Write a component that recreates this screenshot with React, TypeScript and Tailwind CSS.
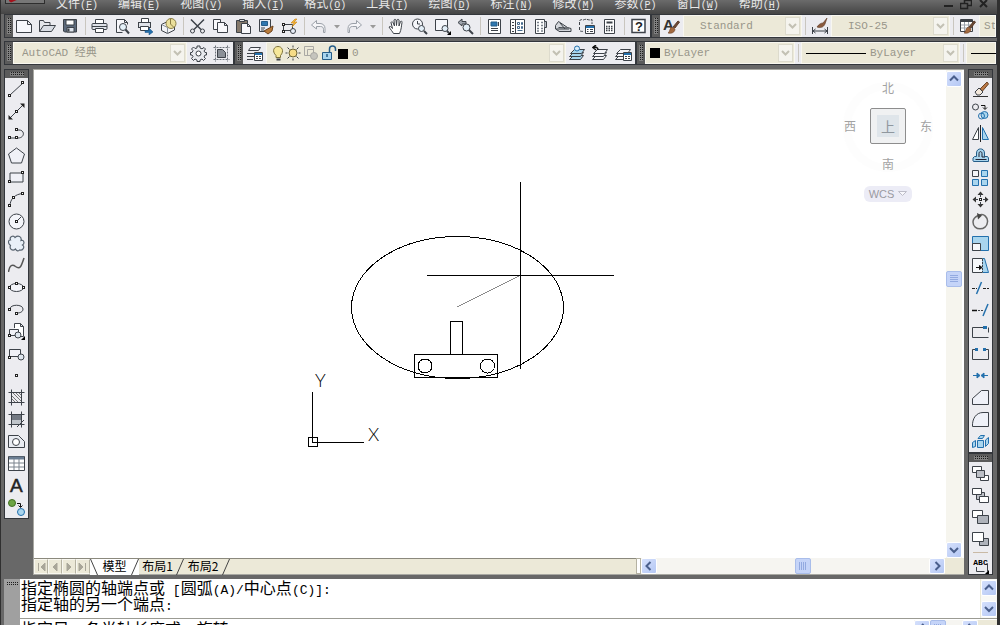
import type { ReactNode } from "react";

const INK = "#3d4249";
const BLUE = "#2370ad";
const SKY = "#a9d5ee";

type Tool = { name: string; icon: ReactNode; slim?: boolean };

const Icon = ({ children }: { children: ReactNode }) => (
  <svg width="17" height="17" viewBox="0 0 17 17" fill="none" stroke={INK} className="shrink-0" aria-hidden="true">
    {children}
  </svg>
);

const Node = ({ x, y }: { x: number; y: number }) => (
  <rect x={x - 0.5} y={y - 0.5} width="2" height="2" fill="#fff" stroke="#222" />
);

const Brush = () => (
  <>
    <path d="M10 9l5-6 1.500 1-4.500 6z" fill="#6d4a35" stroke="#5a3c2c" />
    <path d="M5 15c2-1 1-4 4-6l3 2c0 3-3 5-7 4z" fill="#a2693f" stroke="#6b4026" strokeWidth=".6" />
  </>
);

const Caret = () => <path d="M6 7h6l-3 3.500z" fill="#9a9a9a" stroke="none" />;
const Corner = () => <path d="M17 13v4h-4z" fill="#000" stroke="none" />;

// standard toolbar
const fileTools: Tool[] = [
  { name: "新建", icon: <path d="M.5 2.500h11l4 4v8h-15zM11.500 2.500v4h4" fill="#f7f8fc" /> },
  { name: "打开", icon: <><path d="M.5 13.500v-11h4l1 2h5.500v3" fill="#e4e6ea" /><path d="M.5 13.500l4-6h12l-4 6z" fill="#d9dde4" /></> },
  { name: "保存", icon: <><path d="M1.500 1.500h13v12.500h-12l-1-1z" fill="#5d6a7c" /><path d="M4 2h8v5H4z" fill="#fff" /><path d="M5 9.500h7v4.500H5z" fill="#dfe5ee" /><path d="M6.500 10.500v3" strokeWidth="2" /></> },
];

const plotTools: Tool[] = [
  { name: "打印", icon: <><path d="M4.500 6V1.500h8V6" fill="#fff" /><rect x="1" y="5.500" width="15" height="6" rx="1" fill="#dfe2e8" /><path d="M1 8.500h15" /><path d="M4.500 10.500h8v4h-8z" fill="#fff" /></> },
  { name: "打印预览", icon: <><path d="M2.500 14.500v-13h8l3 3v2M10.500 1.500v3h3M2.500 14.500h6" fill="#f8f8fb" /><circle cx="9" cy="9" r="3.500" fill="#e5f1f9" /><path d="M11.500 11.500l3.500 4" strokeWidth="2" /></> },
  { name: "发布", icon: <><path d="M4.500 5V.5h7V5" fill="#fff" /><rect x="1.500" y="4.500" width="12" height="5" fill="#dfe2e8" /><path d="M3.500 8.500h8v4h-8z" fill="#fff" /><path d="M8 12.500h4v-2.500l4 4-4 3v-2.500H8z" fill={BLUE} stroke="#164f80" strokeWidth=".5" /></> },
  { name: "三维 DWF", icon: <><path d="M1.500 6.500l5-2.500 8 2v6l-7 3.500-6-3z" fill="#f2f3f6" /><path d="M7.500 9.500v6M1.500 6.500l6 3" stroke="#88909a" /><circle cx="11" cy="5.500" r="5" fill="#eadf9b" stroke="#8b7e45" /><path d="M10.500 1v5l3 3" stroke="#8b7e45" /></> },
];

const editTools: Tool[] = [
  { name: "剪切", icon: <><path d="M2 1.500l10 10M15 1.500l-10 10" strokeWidth="1.500" /><circle cx="3.500" cy="13" r="2" /><circle cx="13.500" cy="13" r="2" /></> },
  { name: "复制", icon: <><path d="M1.500 1.500h7v10h-7z" fill="#f8f8fb" /><path d="M5.500 4.500h7l3 3v7h-10zM12.500 4.500v3h3" fill="#f8f8fb" /></> },
  { name: "粘贴", icon: <><path d="M1.500 2.500h11v12h-11z" fill="#85796b" /><path d="M4.500 1.500h5v2h-5z" fill="#ddd" /><path d="M6.500 5.500h6l3 3v7h-9zM12.500 5.500v3h3" fill="#f8f8fb" /></> },
  { name: "特性匹配", icon: <><path d="M1.500 1.500h11v12h-11z" fill="#e8eef4" /><path d="M3.500 3.500h6v4h-6z" fill="#2f78b0" stroke="#255d88" /><path d="M3 10h4M3 12h3" /><path d="M6 13l9-5-1 5-4 3z" fill="#b87b3b" stroke="#6e431e" /></> },
  { name: "块编辑器", icon: <><path d="M2.500 6.500h9v6h-9z" /><Node x={2} y={6} /><Node x={2} y={13} /><circle cx="12" cy="13" r="2.500" fill="#e8eef8" /><path d="M14 1l-4 4h3l-2 4 5-5h-3l3-3z" fill="#f5b63a" stroke="#c98515" strokeWidth=".6" /></> },
];

const undo = <path d="M6.500 2.500l-5 4.500 5 4v-2.500h4c2 0 3 1 3 3v3h1.500v-4c0-3-2-5-5-5H6.500z" stroke="#9aa0a8" fill="#f5f5f8" />;
const redo = <path d="M10.500 2.500l5 4.500-5 4v-2.500h-4c-2 0-3 1-3 3v3H2v-4c0-3 2-5 5-5h3.500z" stroke="#9aa0a8" fill="#f5f5f8" />;

const undoTools: Tool[] = [
  { name: "放弃", icon: undo },
  { name: "放弃列表", icon: <Caret />, slim: true },
  { name: "重做", icon: redo },
  { name: "重做列表", icon: <Caret />, slim: true },
];

const viewTools: Tool[] = [
  { name: "平移", icon: <path d="M5.500 15.500c-1-2-3-4-4.500-6.500 1-1 2-.5 3.500 1.500l-1.500-6c.5-1 1.500-1 2 0L6.500 8l-.5-6c.5-1 1.500-1 2 0l.5 5.500.5-5.500c.5-1 1.500-1 2 0v6l1.500-4.500c1-.8 1.800 0 1.500 1-.7 3.500-.5 7-2.500 11z" fill="#fff" /> },
  { name: "实时缩放", icon: <><circle cx="6.500" cy="6" r="5" fill="#f5f6fa" /><path d="M6.500 3v3H9" /><circle cx="10.500" cy="10.500" r="3" fill="#e3eff8" /><path d="M13 13l3 3" strokeWidth="2" /></> },
  { name: "窗口缩放", icon: <><path d="M1.500 1.500h12v11h-12z" fill="#f5f6fa" /><circle cx="11" cy="10.500" r="3" fill="#e3eff8" /><path d="M13 13l2 2" strokeWidth="2" /><Corner /></> },
  { name: "缩放上一个", icon: <><path d="M1 4.500l4-3.500v2.500h4v2.500H5v2z" fill="#9ea4ac" /><circle cx="9.500" cy="9.500" r="3.500" fill="#e3eff8" /><path d="M12 12l4 4" strokeWidth="2" /></> },
];

const paletteTools: Tool[] = [
  { name: "特性", icon: <><path d="M2.500 1.500h12v14h-12z" fill="#fff" /><path d="M5 4h6v4H5z" fill="#2f78b0" stroke="#255d88" /><path d="M5 10.500h7M5 12.500h7M12.500 4v4" /></> },
  { name: "设计中心", icon: <><path d="M1.500 1.500h14v14h-14z" fill="#fff" /><path d="M6.500 2v13" /><path d="M8.500 4.500h2v2h-2zM12.500 4.500h1v2h-1zM8.500 8.500h2v2h-2zM12.500 8.500h1v2h-1zM8.500 12.500h5" stroke="#44698c" /><path d="M3 4.500h2M3 7.500h2M3 10.500h2M3 13.500h2" /></> },
  { name: "工具选项板", icon: <><path d="M3.500 1.500h9v14h-9z" fill="#fff" /><path d="M12.500 3.500h2v6h-2" fill="#b6bac2" /><path d="M5 4.500h2M9 4.500h2M5 7.500h2M9 7.500h2M5 10.500h2M9 10.500h2M5 13h2M9 13h2" stroke="#7b828c" strokeWidth="1.500" /></> },
  { name: "图纸集", icon: <><path d="M.5 7.500l3-4 9 6 3.500 1v3H4.500L.5 11z" fill="#d4d7dc" /><path d="M3.500 9.500l9 .5M1 11h13M4 13.500h11M5 5l5 6" /></> },
  { name: "标记集", icon: <><path d="M1.500 7V3c2-3 3 0 5-1.500C9 .5 11 3 14 1.500V6M1.500 9v3c1 2 2 1 4 1.500" strokeDasharray="3 1" /><path d="M7.500 7.500h9v8h-9z" fill="#fff" /><path d="M8 9h8" stroke={BLUE} strokeWidth="2" /><path d="M9 11.500h1.500M12 11.500h3M9 13.500h1.500M12 13.500h3" /></> },
  { name: "快速计算器", icon: <><path d="M3.500 1.500h10v14h-10z" fill="#fff" /><path d="M5.500 4.500h6" strokeWidth="2" /><path d="M5 8.500h7M5 10.500h7M5 12.500h7" strokeDasharray="1.500 1" strokeWidth="1.500" /></> },
];

const helpTools: Tool[] = [
  { name: "帮助", icon: <><path d="M2 1.500h13v13H2z" fill="#fff" strokeWidth="1.500" /><text x="5" y="13" fontSize="13" fontWeight="bold" fill="#222" stroke="none" className="font-['Liberation_Sans',sans-serif]">?</text></> },
];

const textStyle: Tool = { name: "文字样式", icon: <><text x="0" y="12" fontSize="15" fontWeight="bold" fill="#333" stroke="none" className="font-['Liberation_Sans',sans-serif]">A</text><Brush /></> };
const dimStyle: Tool = { name: "标注样式", icon: <><path d="M1.500 9v7M16.500 9v7M2 13h14M2 13l2.500-2M2 13l2.500 2M16 13l-2.500-2M16 13l-2.500 2" /><path d="M6 9c2-3 4-4 6-4l4-5-2 6c-2 4-5 4-8 3z" fill="#8a5a3d" stroke="#5d3a26" strokeWidth=".6" /></> };
const tableStyle: Tool = { name: "表格样式", icon: <><path d="M1.500 1.500h12v12h-12z" fill="#fff" /><path d="M2 3h11" strokeWidth="2" /><path d="M2 7h11M2 10h11M5.500 4v9M9.500 4v9" stroke="#9aa2ab" /><Brush /></> };

const workspaceTools: Tool[] = [
  { name: "工作空间设置", icon: <><path d="M7 1h3v2l2 .8L14 2.500 15.500 4 14 6l1 1.500h1.500v2.500H15l-1 2 1.500 1.500-2 2L12 14l-2 1v1.500H7V15l-2-1-1.500 1.500-2-2L3 11.500 2 10H.5V7.500H2L3 5.500 1.500 4 3.500 2 5 3.500 7 3z" fill="#e8eaee" /><circle cx="8.500" cy="8.500" r="2.500" fill="#fff" /></> },
  { name: "我的工作空间", icon: <><path d="M.5 2.500h16M.5 14.500h16M2.500.5v16M14.500.5v16" stroke="#6c727a" strokeDasharray="2 1" /><path d="M4.500 4.500h5l3 3v5h-8z" fill="#8b9097" /></> },
];

const Sheets = ({ tint }: { tint: string }) => (
  <>
    <path d="M4.500 10.500h10l-3 4H.5z" fill={tint} />
    <path d="M4.500 7.500h10l-3 4H.5z" fill={tint} />
    <path d="M5.500 4.500h10l-3 4H1.500z" fill={tint} />
  </>
);
const Panel = () => (
  <>
    <path d="M8.500 7.500h8v8h-8z" fill="#fff" />
    <path d="M9 9h7" stroke={BLUE} strokeWidth="2" />
    <path d="M10 11.500h2M13 11.500h2M10 13.500h2M13 13.500h2" />
  </>
);

const layerManager: Tool = { name: "图层特性管理器", icon: <><path d="M4.500 2.500h10l-2 3h-10zM1 8.500h7M1 11.500h7M1 14.500h6" fill="#f4f4f8" /><Panel /></> };
const layerTools: Tool[] = [
  { name: "将对象的图层置为当前", icon: <><Sheets tint={SKY} /><circle cx="8" cy="3.500" r="2.500" fill="#d8ecf8" stroke={BLUE} /></> },
  { name: "上一个图层", icon: <><Sheets tint="#f4f4f8" /><path d="M6 5C6 2 4 2 1 2.500M4 0L1 2.500 4 5" stroke="#111" strokeWidth="1.500" /></> },
  { name: "图层状态管理器", icon: <><Sheets tint="#f4f4f8" /><Panel /></> },
];

// draw toolbar, left edge
const drawTools: Tool[] = [
  { name: "直线", icon: <><path d="M2 14L15 2" /><Node x={1} y={14} /><Node x={14} y={1} /></> },
  { name: "构造线", icon: <><path d="M2 15L15 2" /><path d="M.5 12v4.500H5zM16.500 5V.5H12z" fill="#222" stroke="none" /><Node x={8} y={8} /></> },
  { name: "多段线", icon: <><path d="M2 13h8c7 0 7-8 1-8H8" /><Node x={1} y={12} /><Node x={8} y={12} /><Node x={8} y={4} /></> },
  { name: "正多边形", icon: <path d="M8.500 1l8 6-3 9h-10l-3-9z" fill="#f0f1f7" /> },
  { name: "矩形", icon: <><path d="M2 4h13v9H2z" fill="#f0f1f7" /><Node x={1} y={12} /><Node x={14} y={3} /></> },
  { name: "圆弧", icon: <><path d="M2 15C2 8 7 3 15 2.500" /><Node x={1} y={14} /><Node x={5} y={6} /><Node x={14} y={2} /></> },
  { name: "圆", icon: <><circle cx="8.500" cy="8.500" r="7.500" fill="#f4f5fa" /><path d="M9 8l4-4" /><Node x={8} y={8} /></> },
  { name: "修订云线", icon: <path d="M7 2.500c3-2.500 7-1 6 3 3-1 4 3 1.500 4.500 3 2 0 6-3 5-1 1.500-3 1-4-1-3 2.500-6.500 0-5-3.500C-.5 8 0 5 2.500 5 1 1.500 5.500 0 7 2.500z" fill="#e9f0f8" stroke="#596470" strokeWidth="1.200" /> },
  { name: "样条曲线", icon: <path d="M.5 15c1-7 4-8 7-5.500 5 3.500 6-1 8.500-8.500" strokeWidth="1.500" stroke="#555" /> },
  { name: "椭圆", icon: <><ellipse cx="8.500" cy="8.500" rx="7" ry="4" fill="#f4f5fa" /><Node x={1} y={8} /><Node x={15} y={8} /><Node x={8} y={4} /></> },
  { name: "椭圆弧", icon: <><path d="M2 8C2 3 15 3 15 8c0 3-3 4-6 4" /><Node x={1} y={8} /><Node x={8} y={12} /></> },
  { name: "插入块", icon: <><path d="M6.500 5V.5h6l3 3v10h-4M12.500.5v3h3" fill="#fff" /><path d="M1.500 6.500h9v6h-9z" fill="#f0f1f7" /><circle cx="10" cy="12" r="3" fill="#dfe6ee" /><Node x={1} y={12} /><Corner /></> },
  { name: "创建块", icon: <><path d="M1.500 4.500h11v7h-11z" fill="#f0f1f7" /><circle cx="13" cy="12" r="3" fill="#dfe6ee" /><Node x={1} y={12} /></> },
  { name: "点", icon: <Node x={8} y={8} /> },
  { name: "图案填充", icon: <><path d="M.5 3.500h16M.5 13.500h16M3.500.5v16M13.500.5v16" /><path d="M4 7l6 6M4 10l3 3M5 4l8 8M8 4l5 5M11 4l2 2" stroke="#777" /></> },
  { name: "渐变色", icon: <><path d="M4 4h9v5H4z" fill="#737982" stroke="none" /><path d="M4 9h9v4H4z" fill="#bfc4ca" stroke="none" /><path d="M.5 3.500h16M.5 13.500h16M3.500.5v16M13.500.5v16M16 9l-7 7" /></> },
  { name: "面域", icon: <><path d="M.5 2.500h10l6 6v6H.5z" fill="#e9ecf2" /><circle cx="8" cy="9" r="3.500" fill="#fff" /></> },
  { name: "表格", icon: <><path d="M.5 1.500h16v14H.5z" fill="#fff" /><path d="M1 3h15" stroke="#6a7d92" strokeWidth="3" /><path d="M1 8h15M1 12h15M6 4v11M11 4v11" stroke="#7b838d" /></> },
  { name: "多行文字", icon: <text x="2" y="15" fontSize="19" fill="#222" stroke="#222" strokeWidth=".5" className="font-['Liberation_Sans',sans-serif]">A</text> },
  { name: "添加选定对象", icon: <><circle cx="4" cy="4" r="3.500" fill="#6da544" stroke="#426f25" /><circle cx="13" cy="13" r="3.500" fill={SKY} stroke={BLUE} /><path d="M9 4.500h3.500V8M10.500 6.500l2 2 2-2" stroke="#111" /></> },
];

// modify toolbar, right edge
const modifyTools: Tool[] = [
  { name: "删除", icon: <><path d="M8 8l7-7 1.500 2-6 7z" fill="#b97745" stroke="#6b4527" /><path d="M3 11l4-4 4 4-3 3H5z" fill="#f4e9dc" /><path d="M1 15.500h15" stroke="#333" /></> },
  { name: "复制对象", icon: <><circle cx="3.500" cy="4" r="3" /><circle cx="12.500" cy="12" r="3.500" fill={SKY} stroke={BLUE} /><circle cx="9.500" cy="13" r="3" stroke={BLUE} /><path d="M9 2.500h4V6M11 4.500l2 2 2-2" stroke="#111" /></> },
  { name: "镜像", icon: <><path d="M6.500 2.500v12h-6z" fill="#fff" /><path d="M10.500 2.500v12h6z" fill={SKY} stroke={BLUE} /><path d="M8.500 0v17" stroke="#222" /></> },
  { name: "偏移", icon: <><path d="M1.500 14.500h15V11l-1-1.500h-3V6c0-5.500-8-5.500-8 0v3.500h-2L1 11v3z" fill={SKY} stroke="#255d88" /><path d="M3.500 12.500h11M7 10V6.500c0-2.500 3-2.500 3 0V10h3" stroke="#223" /></> },
  { name: "阵列", icon: <><path d="M.5 1.500h6v6h-6z" fill="#f3f4f8" /><path d="M9.500 1.500h6v6h-6zM.5 10.500h6v6h-6zM9.500 10.500h6v6h-6z" fill={SKY} stroke={BLUE} /></> },
  { name: "移动", icon: <><path d="M8.500.5l3 3.500h-6zM8.500 16.500l3-3.500h-6zM.5 8.500L4 5.500v6zM16.500 8.500L13 5.500v6z" fill="#333" stroke="none" /><path d="M8.500 3v3M8.500 11v3M3 8.500h3M11 8.500h3" /><Node x={8} y={8} /></> },
  { name: "旋转", icon: <><path d="M7 2.500C12-.5 16 5 15.500 9c-.5 9-14.500 9-14.500 0 0-3 2-5 5-6.500" stroke="#666" strokeWidth="1.500" /><path d="M5 0l5 2.500-4 4z" fill="#444" stroke="none" /></> },
  { name: "缩放", icon: <><path d="M.5 1.500h16v14H.5z" fill={SKY} stroke={BLUE} /><path d="M.5 8.500h8v7h-8z" fill="#f6f8fb" /></> },
  { name: "拉伸", icon: <><path d="M10.500 1.500h2l4 14h-6z" fill={SKY} stroke={BLUE} /><path d="M10.500 1.500h-10v14h10" fill="#f6f8fb" /><path d="M10.500 2v13" strokeDasharray="2 1" /><path d="M4 10.500h5M7.500 8.500l2.500 2-2.500 2z" fill="#111" stroke="#111" /></> },
  { name: "修剪", icon: <><path d="M0 9.500h5M11 9.500h6" stroke="#222" strokeDasharray="3 1" /><path d="M4.500 15l5-12" stroke={BLUE} strokeWidth="1.500" /></> },
  { name: "延伸", icon: <><path d="M0 9.500h5" stroke="#111" strokeWidth="1.500" /><path d="M6 9.500h6" strokeDasharray="2 1" /><path d="M11 15l5-12" stroke={BLUE} strokeWidth="1.500" /></> },
  { name: "打断于点", icon: <><path d="M13 4.500H.5v10h16" /><path d="M16.500 4.500v5" /><rect x="11" y="3" width="4" height="3" fill={BLUE} stroke="none" /></> },
  { name: "打断", icon: <><path d="M4 4.500H.5v10h16v-10H13" /><rect x="3" y="3" width="3" height="3" fill={BLUE} stroke="none" /><rect x="11" y="3" width="3" height="3" fill={BLUE} stroke="none" /></> },
  { name: "合并", icon: <path d="M1 8.500h6M10 8.500h6M5 6l3 2.500L5 11zM12 6L9 8.500l3 2.500z" fill={BLUE} stroke={BLUE} /> },
  { name: "倒角", icon: <><path d="M.5 15.500v-6l9-8h7v14z" fill="#eff1f8" /></> },
  { name: "圆角", icon: <path d="M.5 15.500C0 8 4 1.500 11 1.500h5.500v14z" fill="#eff1f8" /> },
  { name: "分解", icon: <><path d="M5.500 7.500h6v7h-6zM6 5.500l2.500-3h4l-2 3zM13.500 7l3-2.500v6l-3 3zM3.500 7.500l-3 2v5l3-1z" fill={SKY} stroke={BLUE} /></> },
];

const orderTools: Tool[] = [
  { name: "前置", icon: <><path d="M.5 1.500h9v6h-9zM8.500 10.500h8v5h-8z" fill="#fff" /><path d="M4.500 5.500h8v7h-8z" fill="#bcbfc6" /></> },
  { name: "后置", icon: <><path d="M4.500 5.500h8v7h-8z" fill="#bcbfc6" /><path d="M.5 1.500h9v6h-9zM7.500 9.500h9v6h-9z" fill="#fff" /></> },
  { name: "置于对象之上", icon: <><path d="M.5 1.500h10v7H.5z" fill="#fff" /><path d="M5.500 6.500h11v8h-11z" fill="#aeb2ba" /></> },
  { name: "置于对象之下", icon: <><path d="M7.500 7.500h9v7h-9z" fill="#aeb2ba" /><path d="M.5 1.500h11v9H.5z" fill="#fff" /></> },
];

const menus = [
  ["文件", "F"], ["编辑", "E"], ["视图", "V"], ["插入", "I"], ["格式", "O"], ["工具", "T"],
  ["绘图", "D"], ["标注", "N"], ["修改", "M"], ["参数", "P"], ["窗口", "W"], ["帮助", "H"],
];

const ToolButton = ({ tool }: { tool: Tool }) => (
  <button
    type="button"
    aria-label={tool.name}
    title={tool.name}
    className={`${tool.slim ? "w-[13px]" : "w-[23px]"} flex h-[22px] shrink-0 items-start justify-center overflow-hidden pt-[3px] hover:bg-white`}
  >
    <Icon>{tool.icon}</Icon>
  </button>
);

const Tools = ({ items }: { items: Tool[] }) => (
  <>
    {items.map((tool) => (
      <ToolButton key={tool.name} tool={tool} />
    ))}
  </>
);

const Separator = () => (
  <div className="flex w-[6px] shrink-0 justify-center py-0.5">
    <div className="w-px bg-[#c9c6bf]" />
  </div>
);

const Grip = () => (
  <div className="flex w-2 shrink-0 items-center justify-center bg-[#5b5b5b]">
    <div className="h-4 w-1 bg-[conic-gradient(#1c1c1c_25%,#808080_0)] bg-[size:2px_2px]" />
  </div>
);

const GripTop = () => (
  <div className="flex h-2 shrink-0 items-center justify-center bg-[#5b5b5b]">
    <div className="h-1 w-[14px] bg-[conic-gradient(#1c1c1c_25%,#808080_0)] bg-[size:2px_2px]" />
  </div>
);

const Bar = ({ children, className = "shrink-0" }: { children: ReactNode; className?: string }) => (
  <div className={`${className} flex h-6 overflow-hidden border border-[#33363b] bg-[#ececf0]`}>
    <Grip />
    {children}
  </div>
);

const SideBar = ({ children, className = "" }: { children: ReactNode; className?: string }) => (
  <div className={`${className} flex w-[25px] shrink-0 flex-col overflow-hidden border border-[#33363b] bg-[#ececf0]`}>
    <GripTop />
    {children}
  </div>
);

type ComboProps = { label: string; value: string; width: string; pad?: string; arrow?: boolean; children?: ReactNode };

const Combo = ({ label, value, width, pad = "pl-2", arrow = true, children }: ComboProps) => (
  <div className={`${width} relative border border-[#f8f7f0] bg-[#ece9d8]`}>
    <select
      aria-label={label}
      className={`${pad} block h-full w-full appearance-none bg-transparent font-['Liberation_Mono','Noto_Sans_CJK_SC',monospace] text-[11px] text-[#98968a] outline-none`}
    >
      <option>{value}</option>
    </select>
    <div className="pointer-events-none absolute inset-y-0 left-1 flex items-center gap-px">{children}</div>
    {arrow && (
      <div className="pointer-events-none absolute inset-y-px right-px flex w-[15px] items-center justify-center border border-[#dddbcd] bg-[#f5f4ee]">
        <svg width="9" height="6" viewBox="0 0 9 6" fill="none" stroke="#c3c1b4" strokeWidth="2">
          <path d="M1 1l3.500 3.500L8 1" />
        </svg>
      </div>
    )}
  </div>
);

const arrows = {
  up: "M1 6.500l4-4 4 4",
  down: "M1 3l4 4 4-4",
  left: "M6.500 1l-4 4 4 4",
  right: "M3.500 1l4 4-4 4",
};

const ScrollButton = ({ dir }: { dir: keyof typeof arrows }) => (
  <button
    type="button"
    aria-label={`scroll ${dir}`}
    className="flex size-4 shrink-0 items-center justify-center rounded-xs border border-white bg-linear-to-br from-[#d5e0fc] to-[#b5c8f4]"
  >
    <svg width="10" height="10" viewBox="0 0 10 10" fill="none" stroke="#4a5f8c" strokeWidth="2">
      <path d={arrows[dir]} />
    </svg>
  </button>
);

const Thumb = ({ vertical = false }: { vertical?: boolean }) => (
  <div className="flex size-4 shrink-0 items-center justify-center rounded-xs border border-[#a9bdea] bg-[#c5d4f8]">
    <svg width="8" height="8" viewBox="0 0 8 8" stroke="#93aae0">
      <path d={vertical ? "M0 .5h8M0 2.500h8M0 4.500h8M0 6.500h8" : "M.5 0v8M2.500 0v8M4.500 0v8M6.500 0v8"} />
    </svg>
  </div>
);

const LayerState = () => (
  <svg width="77" height="17" viewBox="0 0 77 17" fill="none" stroke={INK}>
    <path d="M5 10.500C.5 6 3 1.500 7 1.500s6.500 4.500 2.500 9v2H5z" fill="#f6e89a" stroke="#7d713a" />
    <path d="M5.500 14.500h4" strokeWidth="2" />
    <circle cx="22" cy="8" r="4" fill="#f6dc86" stroke="#6f6536" />
    <path d="M22 .5v2M22 13.500v2M14.500 8h2M27.500 8h2M16.500 2.500l2 2M25.500 11.500l2 2M27.500 2.500l-2 2M18.500 11.500l-2 2" />
    <path d="M33.500 1.500h9v9h-9zM36.500 4.500h6v6h-6z" stroke="#aaa9a4" />
    <circle cx="43" cy="11" r="3.500" fill="#c5c4bd" stroke="#aaa9a4" />
    <path d="M51.500 7.500h9v7h-9z" fill={SKY} stroke="#255d88" />
    <path d="M58.500 7V4c0-4 6-4 6 0v2M56 9v3" stroke="#255d88" strokeWidth="1.500" />
    <path d="M67 4h10v10H67z" fill="#000" stroke="none" />
  </svg>
);

const MenuBar = () => (
  <header className="flex h-[14px] shrink-0 items-end justify-between overflow-hidden bg-linear-to-b from-[#6b6b6b] to-[#454545]">
    <div className="flex items-end">
      <button type="button" aria-label="AutoCAD" className="ml-1 mr-[11px] flex h-[9px] w-10 items-start self-start border border-t-0 border-[#2e2e2e] bg-[#777]">
        <svg width="38" height="8" viewBox="0 0 38 8">
          <path d="M3 0h26l-4 2.500L13 4 5 7.500 3 6z" fill="#a3121c" />
          <path d="M5 5l5-4 8-1 2 2-9 1z" fill="#6b0a10" />
        </svg>
      </button>
      <nav className="flex gap-5 pb-[3px] font-['Noto_Sans_CJK_SC',sans-serif] text-xs leading-4 text-[#e8e8e8]">
        {menus.map(([name, key]) => (
          <button key={name} type="button" className="shrink-0 whitespace-nowrap">
            {name}
            <span className="font-['Liberation_Mono',monospace] text-[10px] leading-[0]">
              (<u>{key}</u>)
            </span>
          </button>
        ))}
      </nav>
    </div>
    <div className="flex h-full items-start gap-1.5 pr-2">
      <button type="button" aria-label="最小化">
        <svg width="11" height="10" viewBox="0 0 11 10" stroke="#222" strokeWidth="2"><path d="M1 6h9" /></svg>
      </button>
      <button type="button" aria-label="还原">
        <svg width="12" height="10" viewBox="0 0 12 10" stroke="#222" fill="none"><path d="M4.500 3V.5h7v5H8M.5 3.500h7v5h-7z" strokeWidth="1.500" /></svg>
      </button>
      <button type="button" aria-label="关闭">
        <svg width="11" height="10" viewBox="0 0 11 10" stroke="#222" strokeWidth="2"><path d="M2 0l7 7M9 0L2 7" /></svg>
      </button>
    </div>
  </header>
);

const ViewCube = () => (
  <div className="absolute right-2.5 top-3 flex w-24 flex-col items-center gap-3.5 font-['Noto_Sans_CJK_SC',sans-serif] text-xs leading-3 text-[#a2a2a2]">
    <div className="absolute left-1/2 top-0 size-[90px] -translate-x-1/2 rounded-full border-8 border-[#fdfdfd]" />
    <span className="relative">北</span>
    <div className="relative flex w-[88px] items-center justify-between">
      <span>西</span>
      <button type="button" className="flex size-9 items-center justify-center rounded-xs border border-[#8d8d8d] bg-[#f0f1f2]">
        <span className="flex size-[22px] items-center justify-center bg-[#dfe5ea] text-sm text-[#8f979e]">上</span>
      </button>
      <span>东</span>
    </div>
    <span className="relative">南</span>
    <button type="button" className="relative mt-0.5 flex h-4 w-12 items-center justify-center gap-1 rounded-md bg-[#ececf6] font-['Liberation_Sans',sans-serif] text-[11px] text-[#9a9aa2]">
      WCS
      <svg width="9" height="6" viewBox="0 0 9 6" fill="#f8f8fc" stroke="#bdbdc8">
        <path d="M.5.5h8l-4 4z" />
      </svg>
    </button>
  </div>
);

const Drawing = () => (
  <svg className="absolute inset-0 h-full w-full" fill="none" stroke="#000" shapeRendering="crispEdges">
    <ellipse cx="423.500" cy="237.500" rx="106" ry="71" />
    <rect x="416.500" y="251.500" width="12" height="33" />
    <rect x="380.500" y="284.500" width="83" height="23" />
    <circle cx="391" cy="296" r="7" />
    <circle cx="453.500" cy="296" r="7" />
    {/* rubber band and crosshair */}
    <path d="M423 237L486 205.500" stroke="#8a8a8a" />
    <path d="M486.500 112v187M393 205.500h187" />
    {/* ucs icon */}
    <path d="M278.500 322v50h51M274.500 367.500h9v9h-9z" />
    <g fill="#000" stroke="none" className="font-['Lato',sans-serif] text-lg font-light">
      <text x="281" y="317">Y</text>
      <text x="334" y="371">X</text>
    </g>
  </svg>
);

const navIcons = [
  ["第一个", "M2.500 1v8M9 1L5 5l4 4z"],
  ["上一个", "M7 1L3 5l4 4z"],
  ["下一个", "M3 1l4 4-4 4z"],
  ["最后一个", "M7.500 1v8M1 1l4 4-4 4z"],
];

const Slash = ({ back = false }: { back?: boolean }) => (
  <svg width="8" height="16" viewBox="0 0 8 16" fill="none" stroke="#444" className="shrink-0">
    <path d={back ? "M.5 0l7 16" : "M7.500 0l-7 16"} />
  </svg>
);

const LayoutTabs = () => (
  <div className="flex h-4 shrink-0 bg-[#ece9d8]">
    <div className="flex min-w-0 flex-1 border-t border-[#8b897d]">
      {navIcons.map(([name, d]) => (
        <button key={name} type="button" aria-label={name} className="flex w-[14px] shrink-0 items-center justify-center border border-[#f8f7f0] border-r-[#b5b2a2]">
          <svg width="10" height="10" viewBox="0 0 10 10" fill="#a9a699" stroke="#a9a699"><path d={d} /></svg>
        </button>
      ))}
      <div className="flex items-start font-['Noto_Sans_CJK_SC',sans-serif] text-xs leading-[14px] text-black">
        <div className="flex items-start bg-white">
          <Slash back />
          <button type="button" className="w-[33px]">模型</button>
          <Slash />
        </div>
        <button type="button" className="w-[37px]">布局1</button>
        <Slash />
        <button type="button" className="w-[38px]">布局2</button>
        <Slash />
      </div>
    </div>
    <div className="w-[5px] border border-[#b5b2a2] bg-white" />
    <div className="flex w-[304px] bg-[#f6f5f1]">
      <ScrollButton dir="left" />
      <div className="grow-[14]" />
      <Thumb />
      <div className="grow-[12]" />
      <ScrollButton dir="right" />
    </div>
    <div className="w-[19px] shrink-0" />
  </div>
);

const Mono = ({ children }: { children: ReactNode }) => (
  <span className="font-['Liberation_Mono',monospace] text-[13px] leading-[0]">{children}</span>
);

const CommandLine = () => (
  <section className="ml-[3px] flex h-[46px] shrink-0 overflow-hidden bg-white">
    <div className="flex w-4 shrink-0 items-start justify-center bg-[#a0a0a0] pt-[3px]">
      <div className="h-1 w-3 bg-[conic-gradient(#1c1c1c_25%,#a0a0a0_0)] bg-[size:2px_2px]" />
    </div>
    <div className="flex min-w-0 flex-1 flex-col font-['Noto_Sans_CJK_SC',sans-serif] text-base leading-4 text-black">
      <div className="flex h-10 shrink-0 justify-between border-b border-[#9b9b93] pl-px">
        <div className="whitespace-pre">
          <p>
            指定椭圆的轴端点或<Mono> [</Mono>圆弧<Mono>(A)/</Mono>中心点<Mono>(C)]:</Mono>
          </p>
          <p>
            指定轴的另一个端点<Mono>:</Mono>
          </p>
        </div>
        <div className="flex w-[17px] flex-col justify-between border-l border-[#ece9d8] bg-[#f9f9f6] py-px">
          <ScrollButton dir="up" />
          <ScrollButton dir="down" />
        </div>
      </div>
      <div className="flex pl-px pt-px">
        <label htmlFor="command" className="shrink-0 whitespace-pre">
          指定另一条半轴长度或<Mono> [</Mono>旋转<Mono>(R)]:</Mono>
        </label>
        <input id="command" type="text" className="min-w-0 flex-1 outline-none" />
        <div className="flex w-[64px] bg-[#f6f5f1]">
          <ScrollButton dir="left" />
          <Thumb />
          <div className="flex-1" />
          <ScrollButton dir="right" />
        </div>
        <div className="w-[19px] bg-[#ece9d8]" />
      </div>
    </div>
  </section>
);

const App = () => {
  return (
    <div className="flex h-screen flex-col overflow-hidden border-l border-r-3 border-[#303030] bg-[#686868]">
      <MenuBar />
      <div className="flex shrink-0 flex-col gap-[3px] overflow-hidden pb-1 pl-[3px]">
        {/* standard + styles */}
        <div className="flex">
          <Bar>
            <Tools items={fileTools} />
            <Separator />
            <Tools items={plotTools} />
            <Separator />
            <Tools items={editTools} />
            <Separator />
            <Tools items={undoTools} />
            <Separator />
            <Tools items={viewTools} />
            <Separator />
            <Tools items={paletteTools} />
            <Separator />
            <Tools items={helpTools} />
          </Bar>
          <Bar className="min-w-0 flex-1">
            <ToolButton tool={textStyle} />
            <Combo label="文字样式" value="Standard" width="w-[119px] shrink-0" pad="pl-4" />
            <Separator />
            <ToolButton tool={dimStyle} />
            <Combo label="标注样式" value="ISO-25" width="w-[119px] shrink-0" pad="pl-4" />
            <Separator />
            <ToolButton tool={tableStyle} />
            <Combo label="表格样式" value="Standard" width="min-w-0 flex-1" pad="pl-1" arrow={false} />
          </Bar>
        </div>
        {/* workspace + layers + properties */}
        <div className="flex">
          <Bar>
            <Combo label="工作空间" value="AutoCAD 经典" width="w-[174px]" />
            <Tools items={workspaceTools} />
          </Bar>
          <Bar>
            <ToolButton tool={layerManager} />
            <Combo label="图层" value="0" width="w-[300px]" pad="pl-[85px]">
              <LayerState />
            </Combo>
            <Tools items={layerTools} />
          </Bar>
          <Bar className="min-w-0 flex-1">
            <Combo label="颜色" value="ByLayer" width="w-[150px] shrink-0" pad="pl-[18px]">
              <div className="size-[10px] bg-black" />
            </Combo>
            <Separator />
            <Combo label="线型" value="ByLayer" width="w-[159px] shrink-0" pad="pl-[68px]">
              <div className="h-px w-[60px] bg-black" />
            </Combo>
            <Separator />
            <Combo label="线宽" value="" width="min-w-0 flex-1" arrow={false}>
              <div className="h-px w-[60px] bg-black" />
            </Combo>
          </Bar>
        </div>
      </div>

      <div className="flex min-h-0 flex-1 gap-1 pb-1 pl-[3px] pr-1">
        <SideBar className="self-start">
          <Tools items={drawTools} />
        </SideBar>
        <main className="flex min-w-0 flex-1 flex-col border border-r-0 border-[#a8a8a2] bg-white">
          <div className="flex min-h-0 flex-1">
            <div className="relative min-w-0 flex-1 overflow-hidden">
              <Drawing />
              <ViewCube />
            </div>
            <div className="mr-0.5 flex w-4 flex-col bg-[#f6f5ee] pt-px">
              <ScrollButton dir="up" />
              <div className="grow-[18]" />
              <Thumb vertical />
              <div className="grow-[25]" />
              <ScrollButton dir="down" />
            </div>
          </div>
          <LayoutTabs />
        </main>
        <div className="flex flex-col">
          <SideBar className="shrink-0">
            <Tools items={modifyTools} />
          </SideBar>
          <SideBar className="min-h-0 flex-1">
            <Tools items={orderTools} />
            <div className="mx-1 my-0.5 h-px shrink-0 bg-[#c9b9a5]" />
            <button type="button" aria-label="文字前置" className="relative flex h-[19px] shrink-0 justify-center">
              <span className="font-['Liberation_Mono',monospace] text-[8px] font-bold leading-4 text-black">ABC</span>
              <svg width="17" height="17" viewBox="0 0 17 17" fill="none" stroke={INK} className="absolute left-[3px] top-0.5">
                <path d="M15.500 6.500v8M4.500 10v4.500h8" />
                <Corner />
              </svg>
            </button>
          </SideBar>
        </div>
      </div>

      <CommandLine />
    </div>
  );
};

export default App;
